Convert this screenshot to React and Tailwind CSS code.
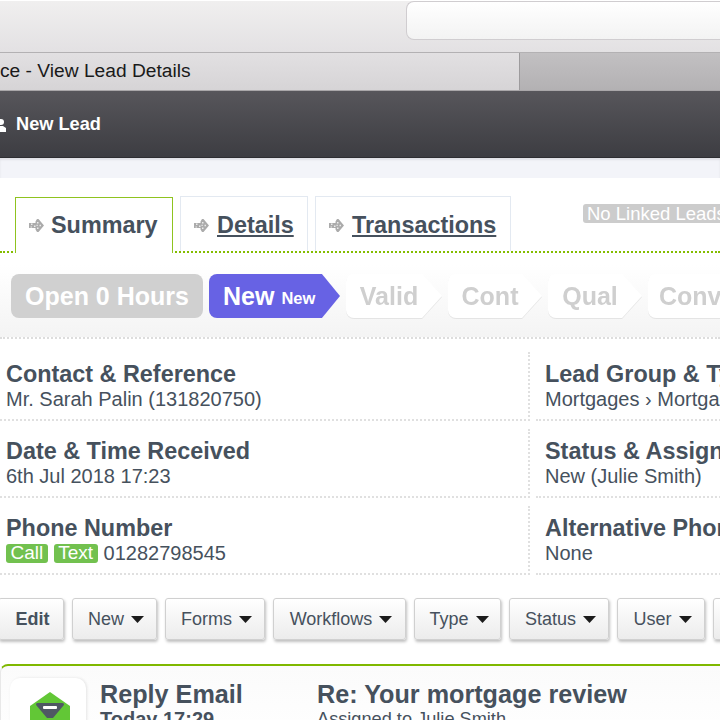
const ink = "text-[#46515d]";

function TabArrow() {
  return (
    <svg width="15" height="13" viewBox="0 0 15 13" className="shrink-0">
      <path d="M8 0l1.500 0 5.500 6.500-5.500 6.500-1.500 0-1.500-2.500 0-1.500-6.500 0 0-5 6.500 0 0-1.500z" fill="#ababab" />
      <path d="M2 4.500h1.500v1.500H2z M5 6.500h1.500V8H5z M1.500 7.500h1.500v1H1.500z M8 3h1.500v1.500H8z M8 8.500h1.500V10H8z M10.500 5.800h1.500v1.500h-1.500z M7.500 5.800h1.200v1.200H7.500z" fill="#ececec" />
    </svg>
  );
}

function Caret() {
  return (
    <svg width="13" height="7" viewBox="0 0 13 7" className="shrink-0">
      <path d="M0 0h13L6.500 7z" fill="#1c1c1c" />
    </svg>
  );
}

function Tab({ label, active, width }) {
  return (
    <div
      className={
        active
          ? `flex h-[56px] shrink-0 items-center gap-[7px] border border-b-0 border-[#8fc31f] bg-white pl-[13px] -mb-[2px] ${width}`
          : `flex h-[55px] shrink-0 items-center gap-[8px] border border-b-0 border-[#e3e9f1] bg-white pl-[13px] pt-[3px] ${width}`
      }
    >
      <TabArrow />
      <span className={`text-[23.4px] font-bold ${ink} ${active ? "" : "underline underline-offset-2"}`}>{label}</span>
    </div>
  );
}

function Stage({ label, width }) {
  return (
    <div className="flex h-[44px] shrink-0 drop-shadow-[0_1px_0_#e4e4e4]" style={{ width }}>
      <div className="flex flex-1 items-center justify-center rounded-l-lg bg-white pl-[11px] pt-[1px] text-[25px] font-bold text-[#cfcfcf]">
        {label}
      </div>
      <div className="h-[44px] w-[21px] bg-white [clip-path:polygon(0_0,5%_0,100%_50%,5%_100%,0_100%)]" />
    </div>
  );
}

function Cell({ title, children }) {
  return (
    <div className={`pt-[8px] ${ink}`}>
      <div className="h-[28px] text-[23.4px] font-bold leading-[28px] whitespace-nowrap">{title}</div>
      <div className="flex h-[22px] items-center text-[20px] leading-[22px] whitespace-nowrap">{children}</div>
    </div>
  );
}

function Btn({ label, strong, caret = true, width }) {
  return (
    <button className={`flex h-[42px] shrink-0 items-center justify-center gap-[7px] rounded-[3px] border border-[#d0d0d0] bg-gradient-to-b from-white to-[#ececec] pl-[3px] text-[18px] shadow-[1px_2px_3px_rgba(0,0,0,0.25)] ${ink} ${strong ? "font-bold" : ""} ${width}`}>
      {label}
      {caret && <Caret />}
    </button>
  );
}

function EnvelopeIcon() {
  return (
    <svg width="40" height="44" viewBox="0 0 40 44" className="ml-[3px]">
      <path d="M20 0L40 14V44H0V14z" fill="#62c736" />
      <path d="M8 11H32Q35 11 33.500 13.500L23 26H17L6.500 13.500Q5 11 8 11z" fill="#4f5863" />
      <rect x="13" y="14" width="14" height="3" rx="1" fill="#fff" />
    </svg>
  );
}

export default function App() {
  return (
    <div className="h-[720px] w-[720px] overflow-hidden bg-white font-['Liberation_Sans',Arial,sans-serif]">
      {/* browser chrome */}
      <div className="h-[52px] border-b border-[#b3b1b3] bg-gradient-to-b from-[#f0efef] to-[#e3e1e3] pl-[406px]">
        <div className="mt-[1px] h-[39px] rounded-l-lg border border-r-0 border-[#d0cdd0] bg-gradient-to-b from-white to-[#f3f3f3]" />
      </div>
      <div className="flex h-[38px] border-b border-[#a9a7a9]">
        <div className="flex w-[520px] items-center border-r border-[#9d9b9d] bg-gradient-to-b from-[#e2e0e2] to-[#d6d4d6] text-[19.2px] text-[#1a1a1a]">
          ce - View Lead Details
        </div>
        <div className="flex-1 bg-gradient-to-b from-[#c2c0c2] to-[#b3b1b3]" />
      </div>

      {/* dark title bar */}
      <div className="flex h-[67px] items-center gap-[10px] border-b border-[#2e2e32] bg-gradient-to-b from-[#57565b] to-[#3d3d42] pt-[2px]">
        <svg width="6" height="13" viewBox="0 0 6 13" className="shrink-0">
          <circle cx="1" cy="3" r="3" fill="#fff" />
          <path d="M0 7h3l3 2v4H0z" fill="#fff" />
        </svg>
        <span className="text-[18.2px] font-bold text-white">New Lead</span>
      </div>
      <div className="h-[20px] bg-[#f3f4f9] shadow-[inset_0_2px_2px_rgba(0,0,0,0.08)]" />

      {/* tabs */}
      <div className="mt-[19px] flex h-[56px] items-end gap-[7px] border-b-2 border-dotted border-[#84bd00] pl-[15px]">
        <Tab label="Summary" active width="w-[158px]" />
        <Tab label="Details" width="w-[128px]" />
        <Tab label="Transactions" width="w-[196px]" />
        <div className="mb-[28px] ml-[65px] flex h-[19px] items-center self-end whitespace-nowrap rounded-[3px] bg-[#cccccc] pl-[4px] text-[18.5px] text-white">
          No Linked Leads
        </div>
      </div>

      {/* stages */}
      <div className="mt-[12px] flex h-[74px] items-start gap-[6px] border-b-2 border-dotted border-[#dddddd] bg-gradient-to-b from-white to-[#f4f4f4] pl-[11px] pt-[9px]">
        <div className="flex h-[44px] w-[192px] shrink-0 items-center justify-center rounded-lg bg-[#d0d0d0] pt-[1px] text-[25px] font-bold text-white">
          Open 0 Hours
        </div>
        <div className="flex h-[44px] w-[131px] shrink-0">
          <div className="flex flex-1 items-center gap-[7px] rounded-l-lg bg-[#6762e4] pl-[14px] pt-[1px] font-bold text-white">
            <span className="text-[25px]">New</span>
            <span className="mt-[3px] text-[16.5px]">New</span>
          </div>
          <div className="h-[44px] w-[19px] bg-[#6762e4] [clip-path:polygon(0_0,5%_0,100%_50%,5%_100%,0_100%)]" />
        </div>
        <Stage label="Valid" width={96} />
        <Stage label="Cont" width={94} />
        <Stage label="Qual" width={94} />
        <Stage label="Conv" width={94} />
      </div>

      {/* lead details */}
      <div className="mt-[13px] grid grid-cols-[530px_200px] gap-x-[6px] gap-y-[8px]">
        <div className="h-[69px] border-b-2 border-r-2 border-dotted border-[#e0e0e0] pl-[6px]">
          <Cell title="Contact & Reference">Mr. Sarah Palin (131820750)</Cell>
        </div>
        <div className="h-[69px] border-b-2 border-dotted border-[#e0e0e0] pl-[9px]">
          <Cell title="Lead Group & Type">Mortgages › Mortgage</Cell>
        </div>
        <div className="h-[69px] border-b-2 border-r-2 border-dotted border-[#e0e0e0] pl-[6px]">
          <Cell title="Date & Time Received">6th Jul 2018 17:23</Cell>
        </div>
        <div className="h-[69px] border-b-2 border-dotted border-[#e0e0e0] pl-[9px]">
          <Cell title="Status & Assigned">New (Julie Smith)</Cell>
        </div>
        <div className="h-[69px] border-b-2 border-r-2 border-dotted border-[#e0e0e0] pl-[6px]">
          <Cell title="Phone Number">
            <span className="mr-[6px] flex h-[19px] items-center rounded-[3px] bg-[#72c14f] px-[4.5px] text-[19px] text-white">Call</span>
            <span className="mr-[6px] flex h-[19px] items-center rounded-[3px] bg-[#72c14f] px-[4.5px] text-[19px] text-white">Text</span>
            01282798545
          </Cell>
        </div>
        <div className="h-[69px] border-b-2 border-dotted border-[#e0e0e0] pl-[9px]">
          <Cell title="Alternative Phone">None</Cell>
        </div>
      </div>

      {/* actions */}
      <div className="-ml-[2px] mt-[23px] flex gap-[8px]">
        <Btn label="Edit" strong caret={false} width="w-[66px]" />
        <Btn label="New" width="w-[85px]" />
        <Btn label="Forms" width="w-[100px]" />
        <Btn label="Workflows" width="w-[133px]" />
        <Btn label="Type" width="w-[87px]" />
        <Btn label="Status" width="w-[100px]" />
        <Btn label="User" width="w-[88px]" />
        <Btn label="" caret={false} width="w-[80px]" />
      </div>

      {/* activity card */}
      <div className="mt-[24px] flex h-[80px] rounded-tl-lg border-l border-t-2 border-[#7fb800] border-l-[#e8e8e8] bg-gradient-to-b from-[#fbfbfb] to-white pl-[9px] pt-[12px]">
        <div className="flex h-[76px] w-[76px] shrink-0 justify-center rounded-[10px] bg-white pt-[14px] shadow-[1px_0_3px_rgba(0,0,0,0.1)]">
          <EnvelopeIcon />
        </div>
        <div className={`ml-[14px] w-[217px] pt-[1px] ${ink}`}>
          <div className="h-[30px] text-[25.2px] font-bold leading-[30px]">Reply Email</div>
          <div className="text-[20px] font-bold leading-[20px]">Today 17:29</div>
        </div>
        <div className={`pt-[1px] ${ink} whitespace-nowrap`}>
          <div className="h-[30px] text-[25.2px] font-bold leading-[30px]">Re: Your mortgage review</div>
          <div className="text-[18.2px] leading-[20px]">Assigned to Julie Smith</div>
        </div>
      </div>
    </div>
  );
}
